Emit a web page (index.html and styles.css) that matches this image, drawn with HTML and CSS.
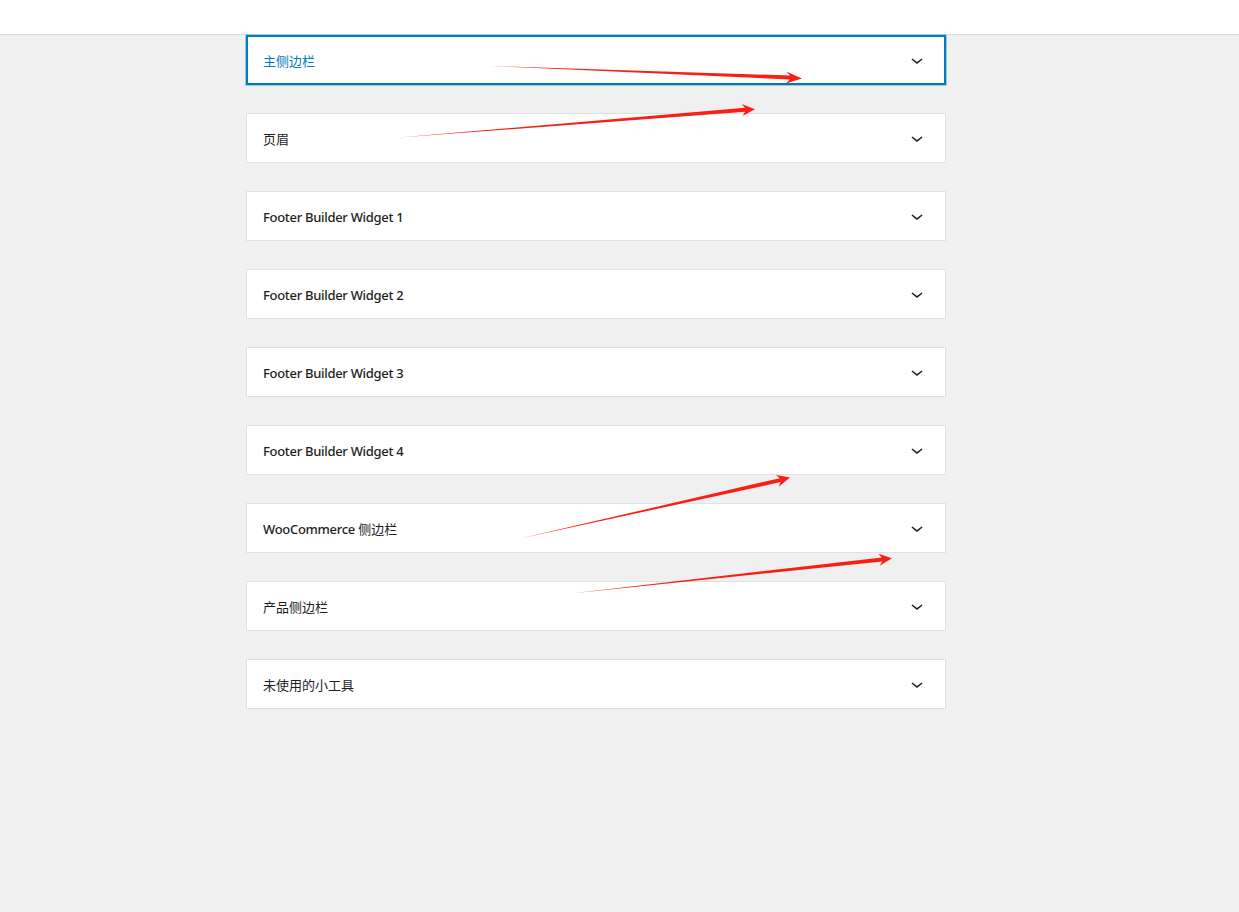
FILE: index.html
```html
<!DOCTYPE html>
<html lang="zh-CN">
<head>
<meta charset="utf-8">
<title>小工具</title>
<link rel="stylesheet" href="styles.css">
</head>
<body>
<header class="topbar"></header>
<main class="areas">
  <div class="area area-focused"><span class="area-title">主侧边栏</span><svg class="chev" viewBox="0 0 24 24" width="24" height="24"><path d="M17.5 11.6L12 16l-5.5-4.4.9-1.2L12 14l4.6-3.6 1 1.2z"/></svg></div>
  <div class="area"><span class="area-title">页眉</span><svg class="chev" viewBox="0 0 24 24" width="24" height="24"><path d="M17.5 11.6L12 16l-5.5-4.4.9-1.2L12 14l4.6-3.6 1 1.2z"/></svg></div>
  <div class="area"><span class="area-title latin">Footer Builder Widget 1</span><svg class="chev" viewBox="0 0 24 24" width="24" height="24"><path d="M17.5 11.6L12 16l-5.5-4.4.9-1.2L12 14l4.6-3.6 1 1.2z"/></svg></div>
  <div class="area"><span class="area-title latin">Footer Builder Widget 2</span><svg class="chev" viewBox="0 0 24 24" width="24" height="24"><path d="M17.5 11.6L12 16l-5.5-4.4.9-1.2L12 14l4.6-3.6 1 1.2z"/></svg></div>
  <div class="area"><span class="area-title latin">Footer Builder Widget 3</span><svg class="chev" viewBox="0 0 24 24" width="24" height="24"><path d="M17.5 11.6L12 16l-5.5-4.4.9-1.2L12 14l4.6-3.6 1 1.2z"/></svg></div>
  <div class="area"><span class="area-title latin">Footer Builder Widget 4</span><svg class="chev" viewBox="0 0 24 24" width="24" height="24"><path d="M17.5 11.6L12 16l-5.5-4.4.9-1.2L12 14l4.6-3.6 1 1.2z"/></svg></div>
  <div class="area"><span class="area-title"><span class="latin">WooCommerce</span> 侧边栏</span><svg class="chev" viewBox="0 0 24 24" width="24" height="24"><path d="M17.5 11.6L12 16l-5.5-4.4.9-1.2L12 14l4.6-3.6 1 1.2z"/></svg></div>
  <div class="area"><span class="area-title">产品侧边栏</span><svg class="chev" viewBox="0 0 24 24" width="24" height="24"><path d="M17.5 11.6L12 16l-5.5-4.4.9-1.2L12 14l4.6-3.6 1 1.2z"/></svg></div>
  <div class="area"><span class="area-title">未使用的小工具</span><svg class="chev" viewBox="0 0 24 24" width="24" height="24"><path d="M17.5 11.6L12 16l-5.5-4.4.9-1.2L12 14l4.6-3.6 1 1.2z"/></svg></div>
</main>
<svg class="annotations" width="1239" height="912" viewBox="0 0 1239 912">
  <polygon points="489,66 790.1,75.5 786.2,71.4 802,78.5 785.8,83.6 789.9,79.5"/>
  <polygon points="399,137.5 744.9,107.8 741.6,104.0 755,109.2 742.5,116.0 745.2,111.8"/>
  <polygon points="520,538.5 779.8,478.2 776.0,475.0 790,477.6 778.6,486.7 780.7,482.1"/>
  <polygon points="571,593.5 881.8,557.4 878.4,553.8 892,558.3 879.7,565.7 882.3,561.4"/>
</svg>
</body>
</html>
```
FILE: styles.css
```css
html, body {
  margin: 0;
  padding: 0;
}
body {
  background: #f0f0f0;
  font-family: "Noto Sans", "Noto Sans CJK SC", sans-serif;
  font-size: 13px;
  color: #1e1e1e;
  min-height: 912px;
  position: relative;
}
.topbar {
  height: 34px;
  background: #ffffff;
  border-bottom: 1px solid #dcdcde;
}
.areas {
  width: 700px;
  margin-left: 246px;
  display: flex;
  flex-direction: column;
  gap: 28px;
}
.area {
  box-sizing: border-box;
  height: 50px;
  background: #ffffff;
  border: 1px solid #e0e0e0;
  display: flex;
  align-items: center;
  justify-content: space-between;
  padding: 0 16px 0 16px;
}
.area-focused {
  border-color: #007cba;
  box-shadow: inset 0 0 0 1px #007cba, 0 0 0 1px #9ecbe4;
}
.area-focused .area-title {
  color: #007cba;
}
.area-title {
  font-weight: 400;
  line-height: 20px;
  padding-top: 2px;
}
.latin {
  font-weight: 500;
  letter-spacing: -0.3px;
}
.chev {
  fill: #1e1e1e;
  display: block;
}
.annotations {
  position: absolute;
  left: 0;
  top: 0;
  pointer-events: none;
}
.annotations polygon {
  fill: #fa1e14;
}
```
